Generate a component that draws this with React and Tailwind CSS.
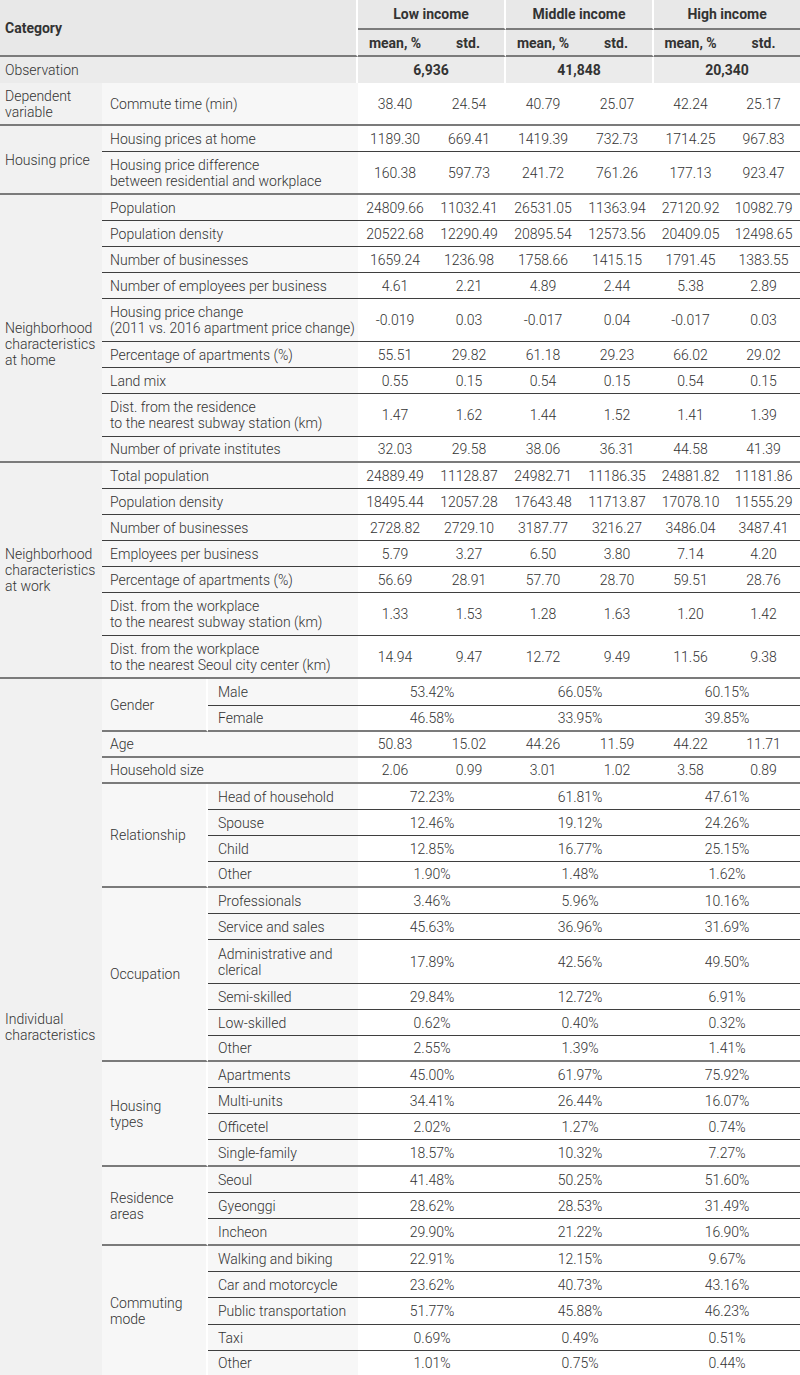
const GROUP = 'border-b-2 border-b-[#7b7b7b]';
const INNER = 'border-b border-b-[#3f3f3f]';

const rows = [
  { c1: { t: 'Dependent\nvariable', span: 1 }, full: 'Commute time (min)', v: ['38.40', '24.54', '40.79', '25.07', '42.24', '25.17'], tall: true, end: true },
  { c1: { t: 'Housing price', span: 2 }, full: 'Housing prices at home', v: ['1189.30', '669.41', '1419.39', '732.73', '1714.25', '967.83'] },
  { full: 'Housing price difference\nbetween residential and workplace', v: ['160.38', '597.73', '241.72', '761.26', '177.13', '923.47'], tall: true, end: true },
  { c1: { t: 'Neighborhood\ncharacteristics\nat home', span: 9, shift: true }, full: 'Population', v: ['24809.66', '11032.41', '26531.05', '11363.94', '27120.92', '10982.79'] },
  { full: 'Population density', v: ['20522.68', '12290.49', '20895.54', '12573.56', '20409.05', '12498.65'] },
  { full: 'Number of businesses', v: ['1659.24', '1236.98', '1758.66', '1415.15', '1791.45', '1383.55'] },
  { full: 'Number of employees per business', v: ['4.61', '2.21', '4.89', '2.44', '5.38', '2.89'] },
  { full: 'Housing price change\n(2011 vs. 2016 apartment price change)', v: ['-0.019', '0.03', '-0.017', '0.04', '-0.017', '0.03'], tall: true },
  { full: 'Percentage of apartments (%)', v: ['55.51', '29.82', '61.18', '29.23', '66.02', '29.02'] },
  { full: 'Land mix', v: ['0.55', '0.15', '0.54', '0.15', '0.54', '0.15'] },
  { full: 'Dist. from the residence\nto the nearest subway station (km)', v: ['1.47', '1.62', '1.44', '1.52', '1.41', '1.39'], tall: true },
  { full: 'Number of private institutes', v: ['32.03', '29.58', '38.06', '36.31', '44.58', '41.39'], end: true },
  { c1: { t: 'Neighborhood\ncharacteristics\nat work', span: 7 }, full: 'Total population', v: ['24889.49', '11128.87', '24982.71', '11186.35', '24881.82', '11181.86'] },
  { full: 'Population density', v: ['18495.44', '12057.28', '17643.48', '11713.87', '17078.10', '11555.29'] },
  { full: 'Number of businesses', v: ['2728.82', '2729.10', '3187.77', '3216.27', '3486.04', '3487.41'] },
  { full: 'Employees per business', v: ['5.79', '3.27', '6.50', '3.80', '7.14', '4.20'] },
  { full: 'Percentage of apartments (%)', v: ['56.69', '28.91', '57.70', '28.70', '59.51', '28.76'] },
  { full: 'Dist. from the workplace\nto the nearest subway station (km)', v: ['1.33', '1.53', '1.28', '1.63', '1.20', '1.42'], tall: true },
  { full: 'Dist. from the workplace\nto the nearest Seoul city center (km)', v: ['14.94', '9.47', '12.72', '9.49', '11.56', '9.38'], tall: true, end: true },
  { c1: { t: 'Individual\ncharacteristics', span: 33 }, sub: { t: 'Gender', span: 2 }, label: 'Male', p: ['53.42%', '66.05%', '60.15%'], plus: true },
  { label: 'Female', p: ['46.58%', '33.95%', '39.85%'], end: true },
  { full: 'Age', v: ['50.83', '15.02', '44.26', '11.59', '44.22', '11.71'], end: true },
  { full: 'Household size', v: ['2.06', '0.99', '3.01', '1.02', '3.58', '0.89'], end: true },
  { sub: { t: 'Relationship', span: 4 }, label: 'Head of household', p: ['72.23%', '61.81%', '47.61%'] },
  { label: 'Spouse', p: ['12.46%', '19.12%', '24.26%'] },
  { label: 'Child', p: ['12.85%', '16.77%', '25.15%'] },
  { label: 'Other', p: ['1.90%', '1.48%', '1.62%'], end: true },
  { sub: { t: 'Occupation', span: 6 }, label: 'Professionals', p: ['3.46%', '5.96%', '10.16%'] },
  { label: 'Service and sales', p: ['45.63%', '36.96%', '31.69%'] },
  { label: 'Administrative and\nclerical', p: ['17.89%', '42.56%', '49.50%'], tall: true, plus: true },
  { label: 'Semi-skilled', p: ['29.84%', '12.72%', '6.91%'] },
  { label: 'Low-skilled', p: ['0.62%', '0.40%', '0.32%'] },
  { label: 'Other', p: ['2.55%', '1.39%', '1.41%'], end: true },
  { sub: { t: 'Housing\ntypes', span: 4 }, label: 'Apartments', p: ['45.00%', '61.97%', '75.92%'] },
  { label: 'Multi-units', p: ['34.41%', '26.44%', '16.07%'] },
  { label: 'Officetel', p: ['2.02%', '1.27%', '0.74%'] },
  { label: 'Single-family', p: ['18.57%', '10.32%', '7.27%'], end: true, plus: true },
  { sub: { t: 'Residence\nareas', span: 3 }, label: 'Seoul', p: ['41.48%', '50.25%', '51.60%'] },
  { label: 'Gyeonggi', p: ['28.62%', '28.53%', '31.49%'] },
  { label: 'Incheon', p: ['29.90%', '21.22%', '16.90%'], end: true, plus: true },
  { sub: { t: 'Commuting\nmode', span: 5 }, label: 'Walking and biking', p: ['22.91%', '12.15%', '9.67%'] },
  { label: 'Car and motorcycle', p: ['23.62%', '40.73%', '43.16%'] },
  { label: 'Public transportation', p: ['51.77%', '45.88%', '46.23%'], plus: true },
  { label: 'Taxi', p: ['0.69%', '0.49%', '0.51%'] },
  { label: 'Other', p: ['1.01%', '0.75%', '0.44%'], end: true },
];

function rowHeight(row) {
  if (row.tall) return row.plus ? 'h-[44px]' : 'h-[43px]';
  return row.plus ? 'h-[27px]' : 'h-[26px]';
}

function BodyRow({ row }) {
  const line = row.end ? GROUP : INNER;
  return (
    <tr className={rowHeight(row)}>
      {row.c1 && (
        <td
          rowSpan={row.c1.span}
          className={`${GROUP} whitespace-pre-line bg-[#f1f1f1] px-[5px] align-middle ${row.c1.shift ? 'pt-8' : ''}`}
        >
          {row.c1.t}
        </td>
      )}
      {row.full && (
        <td colSpan={2} className={`${line} whitespace-pre-line bg-[#f7f7f7] pl-2`}>
          {row.full}
        </td>
      )}
      {row.sub && (
        <td
          rowSpan={row.sub.span}
          className={`${GROUP} whitespace-pre-line border-r-2 border-r-white bg-[#f7f7f7] pl-2`}
        >
          {row.sub.t}
        </td>
      )}
      {row.label && (
        <td className={`${line} whitespace-pre-line bg-[#f7f7f7] pl-[10px]`}>{row.label}</td>
      )}
      {row.v &&
        row.v.map((x, i) => (
          <td key={i} className={`${line} text-center`}>
            {x}
          </td>
        ))}
      {row.p &&
        row.p.map((x, i) => (
          <td key={i} colSpan={2} className={`${line} text-center`}>
            {x}
          </td>
        ))}
    </tr>
  );
}

export default function App() {
  const groups = ['Low income', 'Middle income', 'High income'];
  return (
    <div className="w-[800px] bg-white font-['Roboto',sans-serif] text-[14px] font-light leading-[16px] text-[#333]">
      <table className="w-[800px] table-fixed border-separate border-spacing-0">
        <colgroup>
          <col className="w-[102px]" />
          <col className="w-[106px]" />
          <col className="w-[150px]" />
          <col className="w-[74px]" />
          <col className="w-[74px]" />
          <col className="w-[74px]" />
          <col className="w-[74px]" />
          <col className="w-[73px]" />
          <col className="w-[73px]" />
        </colgroup>
        <thead>
          <tr className="h-[30px]">
            <th
              rowSpan={2}
              colSpan={3}
              className={`${GROUP} border-r-2 border-r-white bg-[#e8e8e8] pl-[5px] text-left font-bold`}
            >
              Category
            </th>
            {groups.map((g, i) => (
              <th
                key={g}
                colSpan={2}
                className={`${GROUP} bg-[#e8e8e8] text-center font-bold ${i < 2 ? 'border-r-2 border-r-white' : ''}`}
              >
                {g}
              </th>
            ))}
          </tr>
          <tr className="h-[27px]">
            {groups.map((g, i) => [
              <th key={g + 'm'} className={`${GROUP} bg-[#e8e8e8] text-center font-bold`}>
                mean, %
              </th>,
              <th
                key={g + 's'}
                className={`${GROUP} bg-[#e8e8e8] text-center font-bold ${i < 2 ? 'border-r-2 border-r-white' : ''}`}
              >
                std.
              </th>,
            ])}
          </tr>
        </thead>
        <tbody>
          <tr className="h-[26px]">
            <td colSpan={3} className="border-r-2 border-r-white bg-[#ebebeb] pl-[5px]">
              Observation
            </td>
            {['6,936', '41,848', '20,340'].map((n, i) => (
              <td
                key={n}
                colSpan={2}
                className={`bg-[#ebebeb] text-center font-bold ${i < 2 ? 'border-r-2 border-r-white' : ''}`}
              >
                {n}
              </td>
            ))}
          </tr>
          {rows.map((r, i) => (
            <BodyRow key={i} row={r} />
          ))}
        </tbody>
      </table>
    </div>
  );
}
